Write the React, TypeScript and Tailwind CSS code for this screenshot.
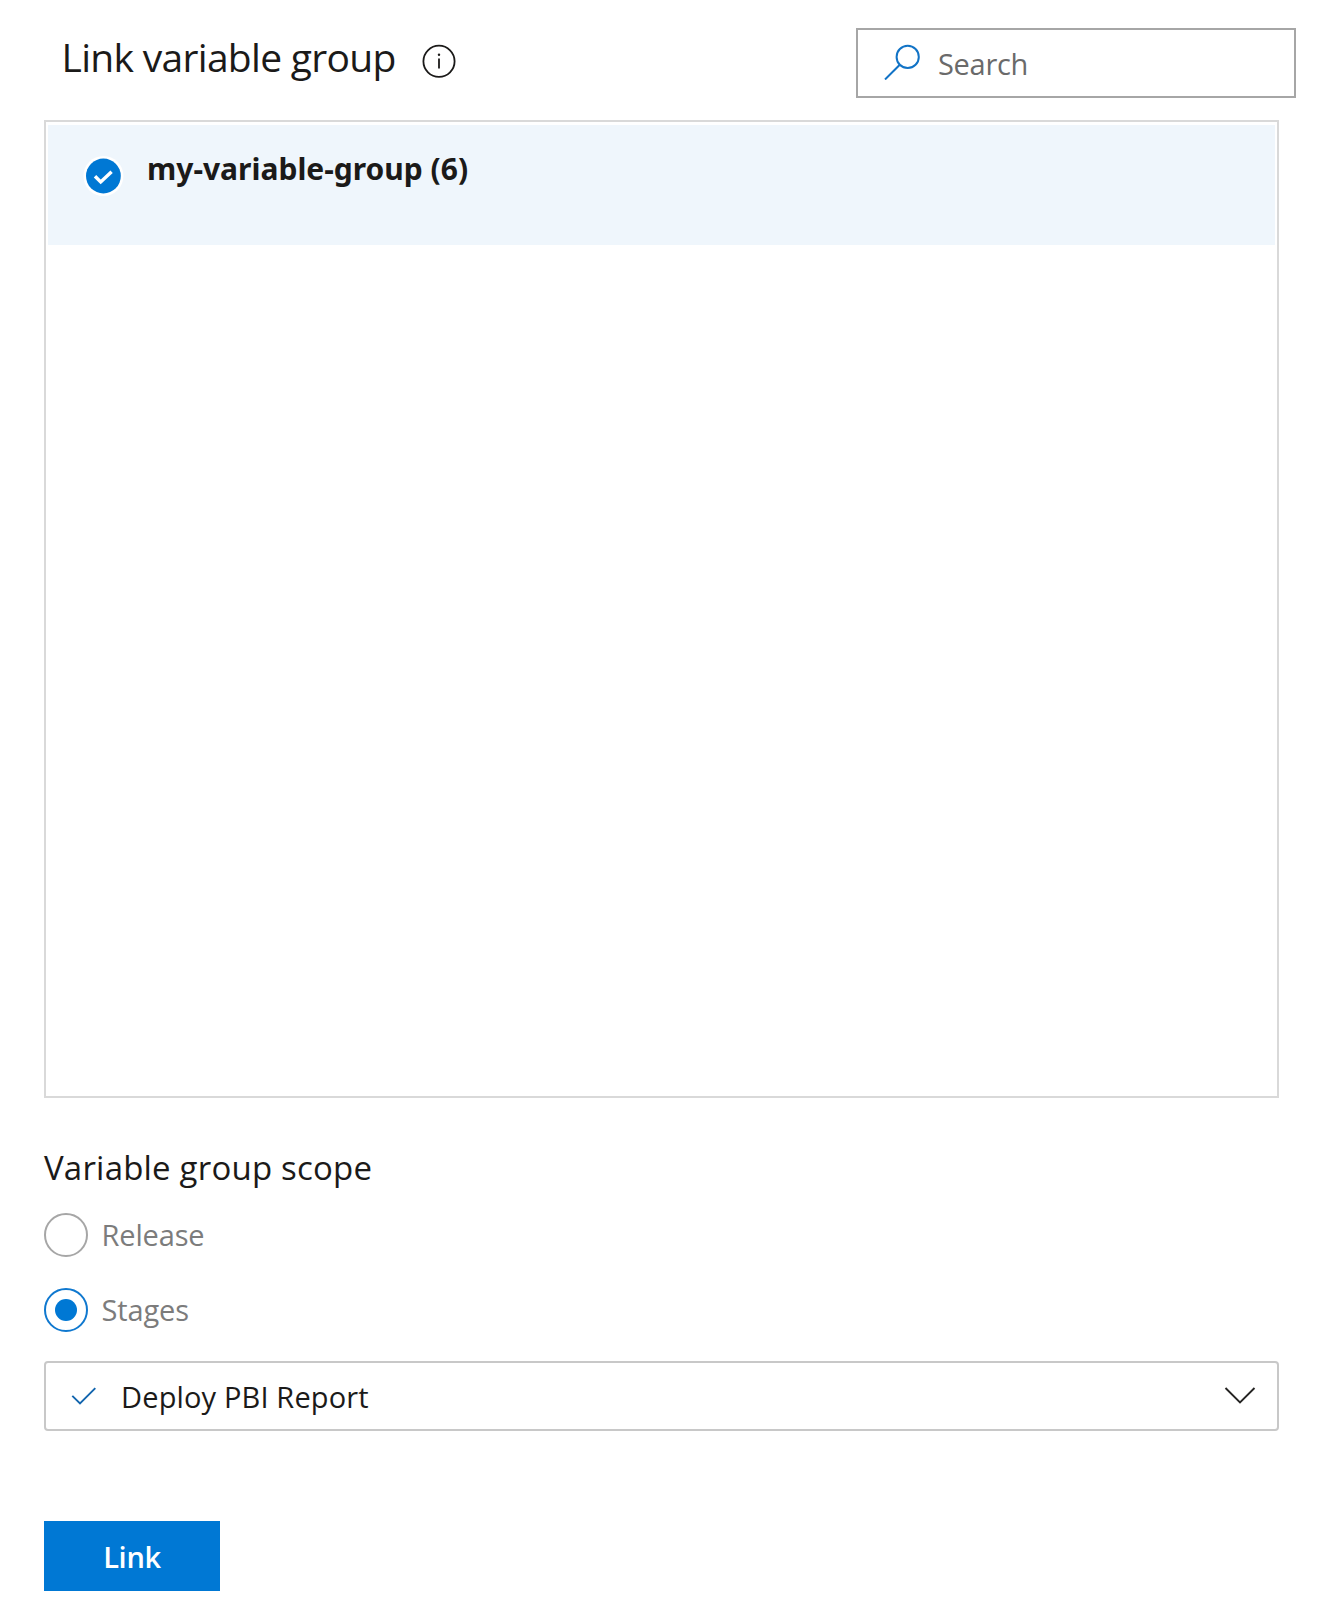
import { useState } from "react";

function InfoIcon() {
  return (
    <svg width="34" height="34" viewBox="0 0 34 34" fill="none" aria-hidden="true">
      <circle cx="17" cy="17.3" r="15.6" stroke="#1b1a19" strokeWidth="1.8" />
      <circle cx="17" cy="10.7" r="1.2" fill="#1b1a19" />
      <path d="M17 14.6V24.6" stroke="#1b1a19" strokeWidth="1.8" />
    </svg>
  );
}

function SearchIcon() {
  return (
    <svg width="36" height="36" viewBox="0 0 36 36" fill="none" stroke="#1173c6" strokeWidth="2" aria-hidden="true">
      <circle cx="23.7" cy="12.9" r="11.1" />
      <path d="M15.8 20.8L1 35.5" />
    </svg>
  );
}

function SelectedIcon() {
  return (
    <svg width="42" height="42" viewBox="0 0 42 42" fill="none" aria-hidden="true">
      <circle cx="21.4" cy="21" r="20" fill="#fff" />
      <circle cx="21.4" cy="21" r="17.4" fill="#0078d4" />
      <path d="M13 21.3L18.7 27L29.6 16.7" stroke="#fff" strokeWidth="3.4" />
    </svg>
  );
}

function Radio({ label, checked, onSelect }: { label: string; checked: boolean; onSelect: () => void }) {
  return (
    <button type="button" role="radio" aria-checked={checked} onClick={onSelect} className="flex h-11 items-center">
      <span
        className={
          checked
            ? "flex size-11 items-center justify-center rounded-full border-2 border-[#0f78cf]"
            : "flex size-11 items-center justify-center rounded-full border-2 border-[#a6a6a6]"
        }
      >
        {checked && <span className="size-[22px] rounded-full bg-[#0078d4]" />}
      </span>
      <span className="ml-[13.5px] text-[29px] leading-[44px] tracking-[-0.15px] text-[#7c7c7c]">{label}</span>
    </button>
  );
}

export default function App() {
  const [scope, setScope] = useState("Stages");
  return (
    <main className="h-[1608px] w-[1338px] bg-white pl-[44px] pt-[28px] font-['Open_Sans','Noto_Sans',sans-serif] text-[#1b1a19]">
      <header className="flex h-[70px] w-[1252px] items-start justify-between">
        <div className="flex items-start whitespace-nowrap pl-[17px]">
          <h1 className="w-[361px] pl-[0.5px] text-[39px] font-normal leading-[58px] tracking-[-0.7px]">Link variable group</h1>
          <div className="pt-[16px]">
            <InfoIcon />
          </div>
        </div>
        <div className="flex h-[70px] w-[440px] items-start border-2 border-[#a6a6a6] pl-[26px] pt-[14px]">
          <SearchIcon />
          <span className="-mt-[2px] ml-[18px] text-[29px] leading-[44px] tracking-[-0.3px] text-[#6a6a6a]">Search</span>
        </div>
      </header>

      <section className="mt-[22px] h-[978px] w-[1235px] border-2 border-[#d9d9d9] px-[2px] pt-[3px]">
        <div className="flex h-[120px] items-start whitespace-nowrap bg-[#eff6fc] pl-[34px] pt-[22px]">
          <div className="mt-[8px]">
            <SelectedIcon />
          </div>
          <span className="ml-[23px] font-['Noto_Sans',sans-serif] text-[30px] font-bold leading-[44px]">my-variable-group (6)</span>
        </div>
      </section>

      <h2 className="mt-[45px] whitespace-nowrap text-[33px] font-normal leading-[50px] tracking-[0.2px]">Variable group scope</h2>
      <div role="radiogroup" className="mt-[20px] flex flex-col gap-[31px]">
        <Radio label="Release" checked={scope === "Release"} onSelect={() => setScope("Release")} />
        <Radio label="Stages" checked={scope === "Stages"} onSelect={() => setScope("Stages")} />
      </div>

      <div className="mt-[29px] flex h-[70px] w-[1235px] items-center rounded-[4px] border-2 border-[#c8c8c8] pl-[25px] pr-[21px]">
        <svg width="26" height="20" viewBox="0 0 26 20" fill="none" aria-hidden="true">
          <path d="M1.3 9.8L9 17.5L24.3 2.2" stroke="#1265ae" strokeWidth="1.9" />
        </svg>
        <span className="ml-[24px] flex-1 pt-[2px] text-[29px] leading-[44px] tracking-[0.15px]">Deploy PBI Report</span>
        <svg width="32" height="20" viewBox="0 0 32 20" fill="none" aria-hidden="true">
          <path d="M1.5 2L16 16.5L30.5 2" stroke="#252423" strokeWidth="1.9" />
        </svg>
      </div>

      <button type="button" className="mt-[90px] flex h-[70px] w-[176px] items-center justify-center bg-[#0078d4] pt-[2px] text-[29px] font-semibold leading-[44px] tracking-[-0.3px] text-white">
        Link
      </button>
    </main>
  );
}
